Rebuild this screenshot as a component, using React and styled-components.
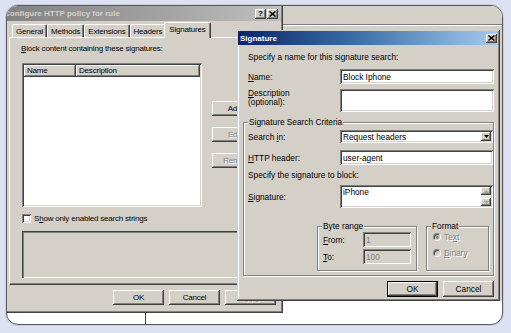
import React from 'react';
import styled, { createGlobalStyle, css } from 'styled-components';

const GlobalStyle = createGlobalStyle`
  html, body { margin: 0; padding: 0; background: #dde2f2; }
  body {
    font-family: "Liberation Sans", Arial, sans-serif;
    font-size: 8px;
    letter-spacing: -0.2px;
    color: #000;
  }
  * { box-sizing: border-box; }
`;

const raised = css`
  box-shadow: inset -1px -1px #404040, inset 1px 1px #ffffff,
    inset -2px -2px #808080, inset 2px 2px #d4d0c8;
`;
const sunken = css`
  box-shadow: inset 1px 1px #808080, inset -1px -1px #ffffff,
    inset 2px 2px #404040, inset -2px -2px #d4d0c8;
`;

const Frame = styled.div`
  width: 511px;
  height: 333px;
  padding: 5px 0 0 6px;
  background: #dde2f2;
  overflow: hidden;
`;

const Card = styled.div`
  position: relative;
  width: 497px;
  height: 320px;
  border: 1px solid #5c5c5c;
  border-radius: 12px;
  overflow: hidden;
  background: #ffffff;
  box-shadow: 0 0 0 1px #c6cce4;
`;

const BackWindow = styled.div`
  position: absolute;
  left: 0;
  top: 0;
  right: 0;
  height: 295px;
  background: #d4d0c8;
  padding-top: 18px;
`;

const BackRule = styled.div`
  height: 2px;
  border-top: 1px solid #7c7c7c;
  border-bottom: 1px solid #ffffff;
`;

const BackDivider = styled.div`
  position: absolute;
  left: 138px;
  top: 306px;
  bottom: 0;
  width: 1px;
  background: #404040;
`;

/* ---------- main dialog ---------- */
const MainDialog = styled.div`
  position: absolute;
  left: -8px;
  top: 0;
  width: 284px;
  height: 307px;
  padding: 0 2px 2px 0;
  background: #d4d0c8;
  display: flex;
  flex-direction: column;
  box-shadow: inset -1px -1px #404040, inset -2px -2px #808080;
`;

const TitleBar = styled.div`
  height: ${p => p.$h}px;
  flex: 0 0 auto;
  display: flex;
  align-items: center;
  justify-content: space-between;
  padding: ${p => p.$pad};
  background: ${p => p.$active
    ? 'linear-gradient(90deg, #0a246a 0%, #3a6ea5 45%, #a6caf0 100%)'
    : 'linear-gradient(90deg, #808080 0%, #a4a4a4 60%, #c0c0c0 100%)'};
  color: ${p => p.$active ? '#ffffff' : '#d4d0c8'};
  font-size: 8px;
  font-weight: bold;
  letter-spacing: 0;
  white-space: nowrap;
`;

const TitleButtons = styled.div`
  display: flex;
  gap: 1px;
`;

const TitleButton = styled.div`
  width: 11px;
  height: ${p => p.$h || 10}px;
  background: #d4d0c8;
  ${raised};
  display: flex;
  align-items: center;
  justify-content: center;
  color: #000;
  font-size: 8px;
  font-weight: bold;
  line-height: 1;
`;

const MainBody = styled.div`
  display: flex;
  flex-direction: column;
  padding: 1px 5px 0 10px;
`;

const TabStrip = styled.div`
  position: relative;
  z-index: 1;
  display: flex;
  align-items: flex-end;
  height: 15px;
  padding-left: 3px;
`;

const Tab = styled.div`
  position: relative;
  height: ${p => (p.$active ? 16 : 13)}px;
  margin: 0 ${p => (p.$active ? -2 : 0)}px ${p => (p.$active ? -1 : 0)}px;
  padding: ${p => (p.$active ? '0 4px 2px' : '0 3px')};
  display: flex;
  align-items: center;
  background: #d4d0c8;
  border-top: 1px solid #ffffff;
  border-left: 1px solid #ffffff;
  border-right: 1px solid #404040;
  border-top-left-radius: 2px;
  border-top-right-radius: 2px;
  box-shadow: inset -1px 0 #808080;
  z-index: ${p => (p.$active ? 2 : 1)};
  white-space: nowrap;
`;

const TabPanel = styled.div`
  height: 248px;
  border-top: 1px solid #ffffff;
  border-left: 1px solid #ffffff;
  border-right: 1px solid #404040;
  border-bottom: 1px solid #404040;
  box-shadow: inset -1px -1px #808080;
  padding: 6px 0 0 11px;
  display: flex;
  flex-direction: column;
  overflow: hidden;
`;

const Line = styled.div`
  height: 10px;
  line-height: 10px;
  white-space: nowrap;
  margin-top: ${p => p.$mt || 0}px;
  color: ${p => (p.$disabled ? '#808080' : '#000')};
`;

const U = styled.span`
  text-decoration: underline;
  text-underline-offset: 0.5px;
`;

const ListRow = styled.div`
  display: flex;
  gap: 10px;
  margin: 9px 0 0 1px;
`;

const ListView = styled.div`
  width: 180px;
  height: 144px;
  background: #ffffff;
  padding: 2px;
  ${sunken};
`;

const ListHeader = styled.div`
  display: flex;
  height: 12px;
`;

const HeaderCell = styled.div`
  flex: ${p => (p.$w ? `0 0 ${p.$w}px` : '1 1 auto')};
  height: 12px;
  line-height: 12px;
  padding-left: 3px;
  background: #d4d0c8;
  ${raised};
  white-space: nowrap;
`;

const SideButtons = styled.div`
  display: flex;
  flex-direction: column;
  gap: 11px;
  padding-top: 38px;
`;

const Button = styled.div`
  width: 51px;
  height: ${p => p.$h || 15}px;
  flex: 0 0 auto;
  background: #d4d0c8;
  display: flex;
  align-items: center;
  justify-content: center;
  white-space: nowrap;
  color: ${p => (p.$disabled ? '#808080' : '#000')};
  text-shadow: ${p => (p.$disabled ? '1px 1px #ffffff' : 'none')};
  ${p => p.$default
    ? css`
        box-shadow: inset 0 0 0 1px #000, inset -2px -2px #404040, inset 2px 2px #ffffff,
          inset -3px -3px #808080;
      `
    : raised};
`;

const CheckRow = styled.div`
  display: flex;
  align-items: center;
  gap: 3px;
  height: 10px;
  margin: 6px 0 0 1px;
  white-space: nowrap;
`;

const CheckBox = styled.div`
  width: 9px;
  height: 9px;
  background: #ffffff;
  ${sunken};
`;

const InfoBox = styled.div`
  width: 245px;
  height: 47px;
  margin: 8px 0 0 1px;
  background: #d4d0c8;
  box-shadow: inset 1px 1px #808080, inset -1px -1px #ffffff;
  border-top: 1px solid #404040;
  border-left: 1px solid #404040;
`;

const ButtonRow = styled.div`
  display: flex;
  justify-content: flex-end;
  gap: 5px;
  margin-top: 5px;
`;

/* ---------- signature dialog ---------- */
const SigDialog = styled.div`
  position: absolute;
  left: 230px;
  top: 24px;
  width: 263px;
  height: 271px;
  padding: 1px 2px 2px 1px;
  background: #d4d0c8;
  display: flex;
  flex-direction: column;
  font-size: 8.3px;
  letter-spacing: 0;
  box-shadow: inset -1px -1px #404040, inset 1px 1px #d4d0c8,
    inset -2px -2px #808080, inset 2px 2px #ffffff;
`;

const SigBody = styled.div`
  display: flex;
  flex-direction: column;
  padding: 7px 4px 0 10px;
`;

const FormRow = styled.div`
  display: grid;
  grid-template-columns: ${p => p.$label || 92}px ${p => (p.$field ? `${p.$field}px` : '1fr')};
  align-items: ${p => (p.$top ? 'start' : 'center')};
  margin-top: ${p => p.$mt || 0}px;
`;

const Label = styled.div`
  line-height: ${p => p.$lh || 10}px;
  padding-top: ${p => p.$pt || 0}px;
  white-space: nowrap;
`;

const Field = styled.div`
  position: relative;
  height: ${p => p.$h}px;
  background: ${p => (p.$disabled ? '#d4d0c8' : '#ffffff')};
  color: ${p => (p.$disabled ? '#808080' : '#000')};
  padding: ${p => (p.$multi ? '2px 0 0 3px' : '0 0 0 3px')};
  display: flex;
  align-items: ${p => (p.$multi ? 'flex-start' : 'center')};
  white-space: nowrap;
  ${sunken};
`;

const FieldText = styled.span`
  flex: 1 1 auto;
`;

const DropButton = styled.div`
  align-self: stretch;
  width: 10px;
  margin: 2px 2px 2px 0;
  background: #d4d0c8;
  display: flex;
  align-items: center;
  justify-content: center;
  ${raised};
`;

const ScrollBar = styled.div`
  align-self: stretch;
  width: 10px;
  margin: 0 2px 2px 0;
  display: flex;
  flex-direction: column;
`;

const ScrollButton = styled.div`
  height: 8px;
  background: #d4d0c8;
  display: flex;
  align-items: center;
  justify-content: center;
  ${raised};
`;

const ScrollTrack = styled.div`
  flex: 1 1 auto;
  background: #ebe9e5;
`;

const GroupBox = styled.div`
  position: relative;
  width: ${p => (p.$w ? `${p.$w}px` : 'auto')};
  height: ${p => (p.$h ? `${p.$h}px` : 'auto')};
  margin: ${p => p.$margin || 0};
  padding: ${p => p.$pad};
  border: 1px solid #808080;
  box-shadow: inset 1px 1px #ffffff, 1px 1px #ffffff;
  display: flex;
  flex-direction: column;
`;

const Legend = styled.div`
  position: absolute;
  top: -6px;
  left: ${p => p.$left}px;
  padding: 0 1px;
  line-height: 10px;
  background: #d4d0c8;
  white-space: nowrap;
`;

const SubGroups = styled.div`
  display: flex;
  gap: 9px;
  margin-top: 18px;
  padding-left: 69px;
`;

const RadioRow = styled.div`
  display: flex;
  align-items: center;
  gap: 3px;
  height: 10px;
  margin-top: ${p => p.$mt || 0}px;
  color: #808080;
  text-shadow: 1px 1px #ffffff;
  white-space: nowrap;
`;

const Radio = styled.div`
  position: relative;
  width: 8px;
  height: 8px;
  border-radius: 50%;
  background: #d4d0c8;
  border: 1px solid;
  border-color: #808080 #ffffff #ffffff #808080;
  box-shadow: inset 1px 1px #404040;
  display: flex;
  align-items: center;
  justify-content: center;
`;

const RadioDot = styled.div`
  width: 3px;
  height: 3px;
  border-radius: 50%;
  background: #808080;
`;

const CloseGlyph = () => (
  <svg width="7" height="6" viewBox="0 0 7 6">
    <path d="M0.5 0.5L6.5 5.5M6.5 0.5L0.5 5.5" stroke="#000" strokeWidth="1.5" />
  </svg>
);

const DownTri = ({ color = '#000' }) => (
  <svg width="5" height="3" viewBox="0 0 5 3">
    <path d="M0 0H5L2.5 3Z" fill={color} />
  </svg>
);

const UpTri = ({ color = '#000' }) => (
  <svg width="5" height="3" viewBox="0 0 5 3">
    <path d="M0 3H5L2.5 0Z" fill={color} />
  </svg>
);

const tabs = ['General', 'Methods', 'Extensions', 'Headers', 'Signatures'];

function ConfigureDialog() {
  return (
    <MainDialog>
      <TitleBar $h={15} $pad="0 3px 0 5px">
        <span>Configure HTTP policy for rule</span>
        <TitleButtons>
          <TitleButton>?</TitleButton>
          <TitleButton><CloseGlyph /></TitleButton>
        </TitleButtons>
      </TitleBar>
      <MainBody>
        <TabStrip>
          {tabs.map(t => (
            <Tab key={t} $active={t === 'Signatures'}>{t}</Tab>
          ))}
        </TabStrip>
        <TabPanel>
          <Line><U>B</U>lock content containing these signatures:</Line>
          <ListRow>
            <ListView>
              <ListHeader>
                <HeaderCell $w={52}>Name</HeaderCell>
                <HeaderCell>Description</HeaderCell>
              </ListHeader>
            </ListView>
            <SideButtons>
              <Button>Add...</Button>
              <Button $disabled>Edit...</Button>
              <Button $disabled>Remove</Button>
            </SideButtons>
          </ListRow>
          <CheckRow>
            <CheckBox />
            <span>S<U>h</U>ow only enabled search strings</span>
          </CheckRow>
          <InfoBox />
        </TabPanel>
        <ButtonRow>
          <Button>OK</Button>
          <Button>Cancel</Button>
          <Button $disabled>Apply</Button>
        </ButtonRow>
      </MainBody>
    </MainDialog>
  );
}

function SignatureDialog() {
  return (
    <SigDialog>
      <TitleBar $h={14} $pad="0 1px 0 2px" $active>
        <span>Signature</span>
        <TitleButton $h={9}><CloseGlyph /></TitleButton>
      </TitleBar>
      <SigBody>
        <Line>Specify a name for this signature search:</Line>
        <FormRow $mt={7}>
          <Label><U>N</U>ame:</Label>
          <Field $h={15}><FieldText>Block Iphone</FieldText></Field>
        </FormRow>
        <FormRow $mt={5} $top>
          <Label $lh={9}><U>D</U>escription<br />(optional):</Label>
          <Field $h={23} />
        </FormRow>
        <GroupBox $margin="10px 0 0 -5px" $pad="7px 0 4px 4px">
          <Legend $left={4}>Signature Search Criteria</Legend>
          <FormRow>
            <Label>Search <U>i</U>n:</Label>
            <Field $h={13}>
              <FieldText>Request headers</FieldText>
              <DropButton><DownTri /></DropButton>
            </Field>
          </FormRow>
          <FormRow $mt={7}>
            <Label><U>H</U>TTP header:</Label>
            <Field $h={15}><FieldText>user-agent</FieldText></Field>
          </FormRow>
          <Line $mt={5}>Specify the signature to block:</Line>
          <FormRow $mt={5}>
            <Label><U>S</U>ignature:</Label>
            <Field $h={23} $multi>
              <FieldText>iPhone</FieldText>
              <ScrollBar>
                <ScrollButton><UpTri color="#a0a0a0" /></ScrollButton>
                <ScrollTrack />
                <ScrollButton><DownTri color="#a0a0a0" /></ScrollButton>
              </ScrollBar>
            </Field>
          </FormRow>
          <SubGroups>
            <GroupBox $w={100} $h={45} $pad="5px 0 0 5px">
              <Legend $left={4}>Byte range</Legend>
              <FormRow $label={40} $field={48}>
                <Label><U>F</U>rom:</Label>
                <Field $h={15} $disabled>1</Field>
              </FormRow>
              <FormRow $label={40} $field={48} $mt={2}>
                <Label><U>T</U>o:</Label>
                <Field $h={15} $disabled>100</Field>
              </FormRow>
            </GroupBox>
            <GroupBox $w={63} $h={45} $pad="5px 0 0 6px">
              <Legend $left={4}>Format</Legend>
              <RadioRow>
                <Radio><RadioDot /></Radio>
                <span>Te<U>x</U>t</span>
              </RadioRow>
              <RadioRow $mt={6}>
                <Radio />
                <span><U>B</U>inary</span>
              </RadioRow>
            </GroupBox>
          </SubGroups>
        </GroupBox>
        <ButtonRow>
          <Button $h={16} $default>OK</Button>
          <Button $h={16}>Cancel</Button>
        </ButtonRow>
      </SigBody>
    </SigDialog>
  );
}

export default function App() {
  return (
    <>
      <GlobalStyle />
      <Frame>
        <Card>
          <BackWindow><BackRule /></BackWindow>
          <BackDivider />
          <ConfigureDialog />
          <SignatureDialog />
        </Card>
      </Frame>
    </>
  );
}
